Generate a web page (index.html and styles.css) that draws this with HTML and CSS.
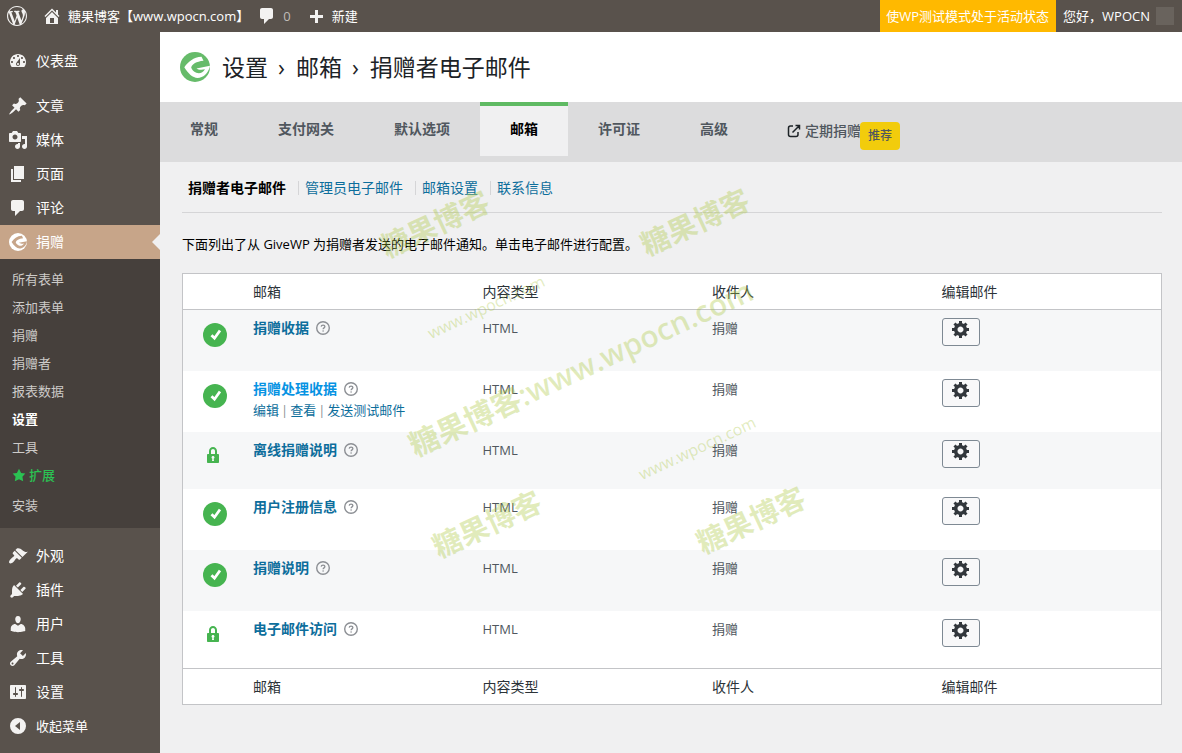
FILE: index.html
```html
<!DOCTYPE html>
<html lang="zh-CN">
<head>
<meta charset="utf-8">
<title>设置 › 邮箱 › 捐赠者电子邮件</title>
<link rel="stylesheet" href="styles.css">
</head>
<body>
<svg class="sprite" aria-hidden="true">
  <symbol id="i-wp" viewBox="0 0 20 20"><path d="M20 10c0-5.51-4.49-10-10-10C4.48 0 0 4.49 0 10c0 5.52 4.48 10 10 10 5.51 0 10-4.48 10-10zM7.78 15.37L4.37 6.22c.55-.02 1.17-.08 1.17-.08.5-.06.44-1.13-.06-1.11 0 0-1.45.11-2.37.11-.18 0-.37 0-.58-.01C4.12 2.69 6.87 1.11 10 1.11c2.33 0 4.45.87 6.05 2.34-.68-.11-1.65.39-1.65 1.58 0 .74.45 1.36.9 2.1.35.61.55 1.36.55 2.46 0 1.49-1.4 5-1.4 5l-3.03-8.37c.54-.02.82-.17.82-.17.5-.05.44-1.25-.06-1.22 0 0-1.44.12-2.38.12-.87 0-2.33-.12-2.33-.12-.5-.03-.56 1.2-.06 1.22l.92.08 1.26 3.41zM17.41 10c.24-.64.74-1.87.43-4.25.7 1.29 1.05 2.71 1.05 4.25 0 3.29-1.73 6.24-4.4 7.78.97-2.59 1.94-5.2 2.92-7.78zM6.1 18.09C3.12 16.65 1.11 13.53 1.11 10c0-1.3.23-2.48.72-3.59C3.25 10.3 4.67 14.2 6.1 18.09zm4.03-6.63l2.58 6.98c-.86.29-1.76.45-2.71.45-.79 0-1.57-.11-2.29-.33.81-2.38 1.62-4.74 2.42-7.1z"/></symbol>
  <symbol id="i-home" viewBox="0 0 20 20"><path d="M16 8.5l1.53 1.53-1.06 1.06L10 4.6l-6.47 6.47-1.06-1.06L10 2.47l4 4V4h2v4.5zm-6-2.46l6 5.99V18H4v-5.97zM12 17v-5H8v5h4z"/></symbol>
  <symbol id="i-comment" viewBox="0 0 20 20"><path d="M5 2h9c1.1 0 2 .9 2 2v7c0 1.1-.9 2-2 2h-2l-5 5v-5H5c-1.1 0-2-.9-2-2V4c0-1.1.9-2 2-2z"/></symbol>
  <symbol id="i-plus" viewBox="0 0 20 20"><path d="M17 9v3h-5v5H9v-5H4V9h5V4h3v5z"/></symbol>
  <symbol id="i-dash" viewBox="0 0 20 20"><path d="M3.76 16h12.48c1.1-1.37 1.76-3.11 1.76-5 0-4.42-3.58-8-8-8s-8 3.58-8 8c0 1.89.66 3.63 1.76 5zM10 4c.55 0 1 .45 1 1s-.45 1-1 1-1-.45-1-1 .45-1 1-1zM6 6c.55 0 1 .45 1 1s-.45 1-1 1-1-.45-1-1 .45-1 1-1zm8 0c.55 0 1 .45 1 1s-.45 1-1 1-1-.45-1-1 .45-1 1-1zm-5.37 5.55L12 7v6c0 1.1-.9 2-2 2s-2-.9-2-2c0-.57.24-1.08.63-1.45zM4 10c.55 0 1 .45 1 1s-.45 1-1 1-1-.45-1-1 .45-1 1-1zm12 0c.55 0 1 .45 1 1s-.45 1-1 1-1-.45-1-1 .45-1 1-1zm-5 3c0-.55-.45-1-1-1s-1 .45-1 1 .45 1 1 1 1-.45 1-1z"/></symbol>
  <symbol id="i-pin" viewBox="0 0 20 20"><path d="M10.44 3.02l1.82-1.82 6.36 6.35-1.83 1.82c-1.05-.68-2.48-.57-3.41.36l-.75.75c-.92.93-1.04 2.35-.35 3.41l-1.83 1.82-2.41-2.41-2.8 2.79c-.42.42-3.38 2.71-3.8 2.29s1.86-3.39 2.28-3.81l2.79-2.79L4.1 9.36l1.83-1.82c1.05.69 2.48.57 3.4-.36l.75-.75c.93-.92 1.05-2.35.36-3.41z"/></symbol>
  <symbol id="i-media" viewBox="0 0 20 20"><path d="M13 11V4c0-.55-.45-1-1-1h-1.67L9 1H5L3.67 3H2c-.55 0-1 .45-1 1v7c0 .55.45 1 1 1h10c.55 0 1-.45 1-1zM7 4.5c1.38 0 2.5 1.12 2.5 2.5S8.38 9.5 7 9.5 4.5 8.38 4.5 7 5.62 4.5 7 4.5zM14 6h5v10.5c0 1.38-1.12 2.5-2.5 2.5S14 17.88 14 16.5s1.12-2.5 2.5-2.5c.17 0 .34.02.5.05V9h-3V6zm-4 8.05V13h2v3.5c0 1.38-1.12 2.5-2.5 2.5S7 17.88 7 16.5 8.12 14 9.5 14c.17 0 .34.02.5.05z"/></symbol>
  <symbol id="i-page" viewBox="0 0 20 20"><path d="M6 15V2h10v13H6zm-1 1h8v2H3V5h2v11z"/></symbol>
  <symbol id="i-brush" viewBox="0 0 20 20"><path d="M14.48 11.06L7.41 3.99l1.5-1.5c.5-.56 2.3-.47 3.51.32 1.21.8 1.43 1.28 2.91 2.1 1.18.64 2.45 1.26 4.45.85zm-.71.71L6.7 4.7 4.93 6.47c-.39.39-.39 1.02 0 1.41l1.06 1.06c.39.39.39 1.03 0 1.42-.6.6-1.43 1.11-2.21 1.69-.35.26-.7.53-1.01.84C1.43 14.23.4 16.08 1.4 17.07c.99 1 2.84-.03 4.18-1.36.31-.31.58-.66.85-1.02.57-.78 1.08-1.61 1.69-2.21.39-.39 1.02-.39 1.41 0l1.06 1.06c.39.39 1.02.39 1.41 0z"/></symbol>
  <symbol id="i-plug" viewBox="0 0 20 20"><path d="M13.11 4.36L9.87 7.6 8 5.73l3.24-3.24c.35-.34 1.05-.2 1.56.32.52.51.66 1.21.31 1.55zm-8 1.77l.91-1.12 9.01 9.01-1.19.84c-.71.71-2.63 1.16-3.82 1.16H6.14L4.9 17.26c-.59.59-1.54.59-2.12 0-.59-.58-.59-1.53 0-2.12l1.24-1.24v-3.88c0-1.13.4-3.19 1.09-3.89zm7.26 3.97l3.24-3.24c.34-.35 1.04-.21 1.55.31.52.51.66 1.21.31 1.55l-3.24 3.25z"/></symbol>
  <symbol id="i-user" viewBox="0 0 20 20"><path d="M10 9.25c-2.27 0-2.73-3.44-2.73-3.44C7 4.02 7.82 2 9.97 2c2.16 0 2.98 2.02 2.71 3.81 0 0-.41 3.44-2.68 3.44zm0 2.57L12.72 10c2.39 0 4.52 2.33 4.52 4.53v2.49s-3.65 1.13-7.24 1.13c-3.65 0-7.24-1.13-7.24-1.13v-2.49c0-2.25 1.94-4.48 4.47-4.48z"/></symbol>
  <symbol id="i-wrench" viewBox="0 0 20 20"><path d="M16.68 9.77c-1.34 1.34-3.3 1.67-4.95.99l-5.41 6.52c-.99.99-2.59.99-3.58 0s-.99-2.59 0-3.57l6.52-5.42c-.68-1.65-.35-3.61.99-4.95 1.28-1.28 3.12-1.62 4.72-1.06l-2.89 2.89 2.82 2.82 2.86-2.87c.53 1.58.18 3.39-1.08 4.65zM3.81 16.21c.4.39 1.04.39 1.43 0 .4-.4.4-1.04 0-1.43-.39-.4-1.03-.4-1.43 0-.39.39-.39 1.03 0 1.43z"/></symbol>
  <symbol id="i-sliders" viewBox="0 0 20 20"><path d="M18 16V4c0-.55-.45-1-1-1H3c-.55 0-1 .45-1 1v12c0 .55.45 1 1 1h14c.55 0 1-.45 1-1zM8 11h1c.55 0 1 .45 1 1s-.45 1-1 1H8v1.5c0 .28-.22.5-.5.5s-.5-.22-.5-.5V13H6c-.55 0-1-.45-1-1s.45-1 1-1h1V5.5c0-.28.22-.5.5-.5s.5.22.5.5V11zm5-2h-1c-.55 0-1-.45-1-1s.45-1 1-1h1V5.5c0-.28.22-.5.5-.5s.5.22.5.5V7h1c.55 0 1 .45 1 1s-.45 1-1 1h-1v5.5c0 .28-.22.5-.5.5s-.5-.22-.5-.5V9z"/></symbol>
  <symbol id="i-collapse" viewBox="0 0 20 20"><path fill-rule="evenodd" d="M10 2a8 8 0 1 0 0 16 8 8 0 0 0 0-16zM12 6v8l-5-4z"/></symbol>
  <symbol id="i-star" viewBox="0 0 20 20"><path d="M10 1l3 6 6 .75-4.12 4.62L16 19l-6-3-6 3 1.13-6.63L1 7.75 7 7z"/></symbol>
  <symbol id="i-gear" viewBox="0 0 20 20"><path d="M18 12h-2.18c-.17.7-.44 1.35-.81 1.93l1.54 1.54-2.1 2.1-1.54-1.54c-.58.36-1.23.63-1.91.79V19H8v-2.18c-.68-.16-1.33-.43-1.91-.79l-1.54 1.54-2.12-2.12 1.54-1.54c-.36-.58-.63-1.23-.79-1.91H1V9.03h2.17c.16-.7.44-1.35.8-1.94L2.43 5.55l2.1-2.1 1.54 1.54c.58-.37 1.24-.64 1.93-.81V2h3v2.18c.68.16 1.33.43 1.91.79l1.54-1.54 2.12 2.12-1.54 1.54c.36.59.64 1.24.8 1.94H18V12zm-8.5 1.5c1.66 0 3-1.34 3-3s-1.34-3-3-3-3 1.34-3 3 1.34 3 3 3z"/></symbol>
  <symbol id="i-lock" viewBox="0 0 20 20"><path d="M14 9h1c.55 0 1 .45 1 1v7c0 .55-.45 1-1 1H5c-.55 0-1-.45-1-1v-7c0-.55.45-1 1-1h1V6c0-2.21 1.79-4 4-4s4 1.79 4 4v3zm-2 0V6c0-1.1-.9-2-2-2s-2 .9-2 2v3h4zm-1 7l-.36-2.15c.51-.24.86-.75.86-1.35 0-.83-.67-1.5-1.5-1.5S8.5 11.67 8.5 12.5c0 .6.35 1.11.86 1.35L9 16h2z"/></symbol>
  <symbol id="i-check" viewBox="0 0 24 24"><circle cx="12" cy="12" r="12"/><path d="M8.500 12.200l3 3L17 7.500" fill="none" stroke="#fff" stroke-width="2.800"/></symbol>
  <symbol id="i-help" viewBox="0 0 14 14"><circle cx="7" cy="7" r="6.300" fill="none" stroke="currentColor" stroke-width="1.400"/><path d="M5.200 5.600C5.300 3.500 8.900 3.500 8.900 5.600 8.900 6.900 7.100 6.900 7.100 8.300" fill="none" stroke="currentColor" stroke-width="1.300"/><circle cx="7.100" cy="10" r=".8"/></symbol>
  <symbol id="i-external" viewBox="0 0 14 14"><path d="M6 2H3.500C2 2 1.500 2.500 1.500 4v6.500C1.500 12 2 12.500 3.500 12.500H9c1.500 0 2-.5 2-2V8M8.500 1.500H12.500V5.500M12.500 1.500L5.500 8.500" fill="none" stroke="currentColor" stroke-width="1.500"/></symbol>
  <symbol id="i-give" viewBox="0 0 30 30"><circle cx="15" cy="15" r="15"/><path class="mark" d="M21.500 4.700C13.500 5 8 10 4.300 15.200 8 21.500 12.800 25.700 17.500 25.900 23.500 25.900 27.500 21.500 29.600 15.800L30 13.700 16.500 16.400C18 17.800 21.500 18.200 25 17.300 22.800 21 19.500 22 16.300 20.800 13.500 19.600 11.800 17.500 11.200 15.400 12.500 12 16 9.600 23.500 8.800z"/></symbol>
</svg>

<header class="topbar">
  <nav class="topbar-group" aria-label="工具栏">
    <a class="top-item top-wp" href="#" aria-label="WordPress"><svg class="icon"><use href="#i-wp"/></svg></a>
    <a class="top-item top-site" href="#"><svg class="icon"><use href="#i-home"/></svg>糖果博客【www.wpocn.com】</a>
    <a class="top-item top-comments" href="#"><svg class="icon"><use href="#i-comment"/></svg><span class="count">0</span></a>
    <a class="top-item top-new" href="#"><svg class="icon"><use href="#i-plus"/></svg>新建</a>
  </nav>
  <div class="topbar-group">
    <a class="test-mode" href="#">使WP测试模式处于活动状态</a>
    <a class="account" href="#">您好，WPOCN<span class="avatar"></span></a>
  </div>
</header>

<div class="layout">
  <nav class="sidebar" aria-label="主菜单">
    <ul class="menu">
      <li><a class="menu-item" href="#"><svg class="icon"><use href="#i-dash"/></svg>仪表盘</a></li>
    </ul>
    <ul class="menu">
      <li><a class="menu-item" href="#"><svg class="icon"><use href="#i-pin"/></svg>文章</a></li>
      <li><a class="menu-item" href="#"><svg class="icon"><use href="#i-media"/></svg>媒体</a></li>
      <li><a class="menu-item" href="#"><svg class="icon"><use href="#i-page"/></svg>页面</a></li>
      <li><a class="menu-item" href="#"><svg class="icon"><use href="#i-comment"/></svg>评论</a></li>
      <li>
        <a class="menu-item current" href="#"><svg class="icon give-menu"><use href="#i-give"/></svg>捐赠</a>
        <ul class="submenu">
          <li><a href="#">所有表单</a></li>
          <li><a href="#">添加表单</a></li>
          <li><a href="#">捐赠</a></li>
          <li><a href="#">捐赠者</a></li>
          <li><a href="#">报表数据</a></li>
          <li><a class="selected" href="#">设置</a></li>
          <li><a href="#">工具</a></li>
          <li><a class="addons" href="#"><svg><use href="#i-star"/></svg>扩展</a></li>
          <li><a href="#">安装</a></li>
        </ul>
      </li>
    </ul>
    <ul class="menu">
      <li><a class="menu-item" href="#"><svg class="icon"><use href="#i-brush"/></svg>外观</a></li>
      <li><a class="menu-item" href="#"><svg class="icon"><use href="#i-plug"/></svg>插件</a></li>
      <li><a class="menu-item" href="#"><svg class="icon"><use href="#i-user"/></svg>用户</a></li>
      <li><a class="menu-item" href="#"><svg class="icon"><use href="#i-wrench"/></svg>工具</a></li>
      <li><a class="menu-item" href="#"><svg class="icon"><use href="#i-sliders"/></svg>设置</a></li>
      <li><button class="menu-item collapse" type="button"><svg class="icon"><use href="#i-collapse"/></svg>收起菜单</button></li>
    </ul>
  </nav>

  <main class="main">
    <div class="page-head">
      <svg class="logo"><use href="#i-give"/></svg>
      <h1>设置<span class="sep">›</span>邮箱<span class="sep">›</span>捐赠者电子邮件</h1>
    </div>
    <nav class="tabs" aria-label="设置标签">
      <a class="tab" href="#">常规</a>
      <a class="tab" href="#">支付网关</a>
      <a class="tab" href="#">默认选项</a>
      <a class="tab active" href="#">邮箱</a>
      <a class="tab" href="#">许可证</a>
      <a class="tab" href="#">高级</a>
      <a class="tab tab-external" href="#"><svg class="external"><use href="#i-external"/></svg>定期捐赠<span class="badge">推荐</span></a>
    </nav>
    <div class="content">
      <nav class="subnav" aria-label="邮箱">
        <a class="here" href="#">捐赠者电子邮件</a>
        <a href="#">管理员电子邮件</a>
        <a href="#">邮箱设置</a>
        <a href="#">联系信息</a>
      </nav>
      <p class="intro">下面列出了从 GiveWP 为捐赠者发送的电子邮件通知。单击电子邮件进行配置。</p>
      <table class="emails">
        <thead>
          <tr><th class="col-status"></th><th>邮箱</th><th>内容类型</th><th>收件人</th><th>编辑邮件</th></tr>
        </thead>
        <tbody>
          <tr>
            <td class="status enabled"><svg><use href="#i-check"/></svg></td>
            <td><div class="name"><a href="#">捐赠收据</a><svg class="help"><use href="#i-help"/></svg></div></td>
            <td>HTML</td><td>捐赠</td>
            <td><button class="edit" type="button" aria-label="编辑 捐赠收据"><svg class="icon"><use href="#i-gear"/></svg></button></td>
          </tr>
          <tr>
            <td class="status enabled"><svg><use href="#i-check"/></svg></td>
            <td><div class="name hover"><a href="#">捐赠处理收据</a><svg class="help"><use href="#i-help"/></svg></div>
              <div class="actions"><a href="#">编辑</a><span>|</span><a href="#">查看</a><span>|</span><a href="#">发送测试邮件</a></div></td>
            <td>HTML</td><td>捐赠</td>
            <td><button class="edit" type="button" aria-label="编辑 捐赠处理收据"><svg class="icon"><use href="#i-gear"/></svg></button></td>
          </tr>
          <tr>
            <td class="status locked"><svg><use href="#i-lock"/></svg></td>
            <td><div class="name"><a href="#">离线捐赠说明</a><svg class="help"><use href="#i-help"/></svg></div></td>
            <td>HTML</td><td>捐赠</td>
            <td><button class="edit" type="button" aria-label="编辑 离线捐赠说明"><svg class="icon"><use href="#i-gear"/></svg></button></td>
          </tr>
          <tr>
            <td class="status enabled"><svg><use href="#i-check"/></svg></td>
            <td><div class="name"><a href="#">用户注册信息</a><svg class="help"><use href="#i-help"/></svg></div></td>
            <td>HTML</td><td>捐赠</td>
            <td><button class="edit" type="button" aria-label="编辑 用户注册信息"><svg class="icon"><use href="#i-gear"/></svg></button></td>
          </tr>
          <tr>
            <td class="status enabled"><svg><use href="#i-check"/></svg></td>
            <td><div class="name"><a href="#">捐赠说明</a><svg class="help"><use href="#i-help"/></svg></div></td>
            <td>HTML</td><td>捐赠</td>
            <td><button class="edit" type="button" aria-label="编辑 捐赠说明"><svg class="icon"><use href="#i-gear"/></svg></button></td>
          </tr>
          <tr>
            <td class="status locked"><svg><use href="#i-lock"/></svg></td>
            <td><div class="name"><a href="#">电子邮件访问</a><svg class="help"><use href="#i-help"/></svg></div></td>
            <td>HTML</td><td>捐赠</td>
            <td><button class="edit" type="button" aria-label="编辑 电子邮件访问"><svg class="icon"><use href="#i-gear"/></svg></button></td>
          </tr>
        </tbody>
        <tfoot>
          <tr><th></th><th>邮箱</th><th>内容类型</th><th>收件人</th><th>编辑邮件</th></tr>
        </tfoot>
      </table>
    </div>
    <div class="watermarks">
      <span class="mark-text wm-a">糖果博客</span>
      <span class="mark-text wm-b">糖果博客</span>
      <span class="mark-text wm-c">糖果博客</span>
      <span class="mark-text wm-d">糖果博客</span>
      <span class="mark-text large">糖果博客:www.wpocn.com</span>
      <span class="mark-text small wm-e">www.wpocn.com</span>
      <span class="mark-text small wm-f">www.wpocn.com</span>
    </div>
  </main>
</div>
</body>
</html>
```
FILE: styles.css
```css
* { box-sizing: border-box; }

body {
  margin: 0;
  min-height: 100vh;
  display: flex;
  flex-direction: column;
  background: #f0f0f1;
  color: #3c434a;
  font: 13px/20px "Open Sans", "Noto Sans CJK SC", sans-serif;
}

a { color: #0d6e9c; text-decoration: none; }
ul { margin: 0; padding: 0; list-style: none; }
svg { display: block; flex: none; fill: currentColor; }
.sprite { position: absolute; width: 0; height: 0; }
.icon { width: 20px; height: 20px; }

/* Top bar */
.topbar {
  display: flex;
  justify-content: space-between;
  height: 32px;
  background: #59524c;
  color: #fff;
}
.topbar-group { display: flex; }
.topbar a { display: flex; align-items: center; color: #fff; }
.top-item { gap: 6px; padding: 0 8px; }
.top-item .icon { color: #f3f2f1; }
.topbar .top-wp { padding: 0 7px; }
.topbar .top-site { padding-right: 4px; }
.topbar .top-comments { padding-left: 4px; }
.topbar .top-new { padding-left: 7px; }
.top-comments .count { color: #c0bcb8; }
.test-mode { padding: 0 7px 0 6px; background: #ffb900; }
.account { gap: 6px; padding: 0 8px 0 7px; }
.avatar { width: 18px; height: 18px; background: #69635d; }

/* Sidebar */
.layout { display: flex; flex: 1; }
.sidebar {
  flex: none;
  width: 160px;
  padding-top: 12px;
  background: #59524c;
}
.menu { padding-bottom: 11px; }
.menu-item {
  position: relative;
  display: flex;
  align-items: center;
  gap: 8px;
  width: 100%;
  height: 34px;
  padding: 0 8px;
  border: 0;
  background: none;
  color: #fff;
  font: 14px/18px "Open Sans", "Noto Sans CJK SC", sans-serif;
}
.menu-item .icon { color: #f3f2f1; }
.menu-item.collapse { font-size: 13px; }
.menu-item.current { background: #c7a589; }
.menu-item.current::after {
  content: "";
  position: absolute;
  right: 0;
  top: 9px;
  border: 8px solid transparent;
  border-left-width: 0;
  border-right-color: #f0f0f1;
}
.mark { fill: var(--mark, #fff); }
.menu-item .give-menu { --mark: #c7a589; padding: 1px; color: #fff; }
.submenu { padding: 6px 0 9px; background: #46403c; }
.submenu a {
  display: flex;
  align-items: center;
  gap: 3px;
  height: 28px;
  padding: 0 12px;
  color: #cdcbc9;
}
.submenu .selected { color: #fff; font-weight: 600; }
.submenu .addons { height: 30px; padding-bottom: 2px; color: #2bc253; font-weight: 500; }
.addons svg { width: 14px; height: 14px; }

/* Page heading and tabs */
.main { position: relative; flex: 1; min-width: 0; }
.page-head {
  display: flex;
  align-items: center;
  gap: 12px;
  padding: 20px;
  background: #fff;
}
.logo { width: 30px; height: 30px; color: #66bb6a; }
h1 { margin: 0; color: #1d2327; font-size: 23px; font-weight: 400; line-height: 30px; }
.sep { margin: 0 11px 0 10px; }
.tabs {
  display: flex;
  align-items: flex-start;
  padding-bottom: 6px;
  background: #dcdcdd;
}
.tab {
  padding: 13px 30px 17px;
  border-top: 4px solid transparent;
  color: #50575e;
  font-size: 14px;
  font-weight: 600;
}
.tab.active { border-color: #5fba63; background: #f0f0f1; color: #000; }
.tab-external { display: flex; padding: 15px 30px 0 29px; font-weight: 500; }
.external { width: 14px; height: 14px; margin: 3px 4px 0 0; color: #1d2327; }
.badge {
  margin: 1px 0 0 -1px;
  padding: 4px 8px;
  border-radius: 4px;
  background: #f2cc0c;
  font-size: 12px;
}

/* Sub navigation */
.content { padding: 16px 20px 20px 22px; }
.subnav {
  display: flex;
  padding: 0 6px 14px;
  border-bottom: 1px solid #d5d5d7;
  font-size: 14px;
}
.subnav a + a { margin-left: 12px; padding-left: 7px; background: linear-gradient(#d5d5d7, #d5d5d7) 0 3px / 1px 14px no-repeat; }
.subnav .here { color: #000; font-weight: 600; }
.intro { margin: 21px 0 19px; color: #000; }

/* Email table */
.emails {
  width: 100%;
  table-layout: fixed;
  border: 1px solid #c3c4c7;
  border-spacing: 0;
  background: #fff;
}
.col-status { width: 60px; }
th {
  padding: 8px 10px 7px;
  color: #2c3338;
  font-size: 14px;
  font-weight: 400;
  text-align: left;
}
thead th { border-bottom: 1px solid #c3c4c7; }
tfoot th { border-top: 1px solid #c3c4c7; }
td { height: 57px; padding: 8px 10px; color: #50575e; vertical-align: top; }
tbody tr:nth-child(odd) { background: #f6f7f8; }
.status { padding-left: 20px; }
.status.enabled { padding-top: 13px; padding-bottom: 24px; color: #46b450; }
.status.locked { padding-top: 13px; color: #46b450; }
.enabled svg { width: 24px; height: 24px; }
.locked svg { width: 20px; height: 20px; }
.name { display: flex; align-items: center; gap: 7px; font-size: 14px; }
.name a { font-weight: 600; }
.name.hover a { color: #0693e3; }
.help { width: 14px; height: 14px; color: #8c8f94; }
.actions { display: flex; gap: 2px; padding-top: 1px; color: #8c8f94; }
.edit {
  display: block;
  height: 28px;
  padding: 0 8px 6px;
  border: 1px solid #7e8993;
  border-radius: 3px;
  background: #f8f8f9;
  color: #32373c;
}

/* Watermarks lie over the page */
.watermarks { position: absolute; inset: 0; overflow: hidden; pointer-events: none; }
.mark-text {
  position: absolute;
  transform: translate(-50%, -50%) rotate(-25deg);
  color: rgba(168, 198, 60, 0.34);
  font-size: 29px;
  font-weight: 600;
  line-height: 40px;
  white-space: nowrap;
}
.mark-text.large { left: 421px; top: 336px; font-size: 30px; }
.mark-text.small { font-size: 16px; font-weight: 500; }
.wm-a { left: 275px; top: 192px; }
.wm-b { left: 535px; top: 190px; }
.wm-c { left: 327px; top: 492px; }
.wm-d { left: 591px; top: 488px; }
.wm-e { left: 326px; top: 275px; }
.wm-f { left: 537px; top: 416px; }
```
